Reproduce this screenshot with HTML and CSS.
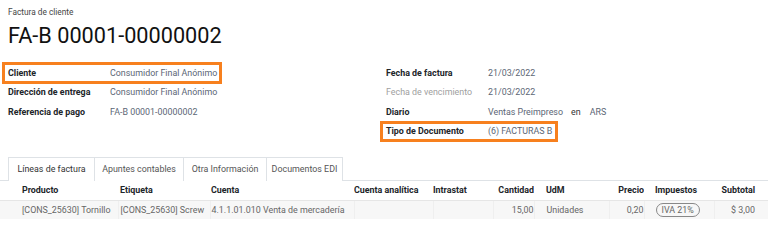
FILE: index.html
```html
<!DOCTYPE html>
<html lang="es">
<head>
<meta charset="utf-8">
<link rel="stylesheet" href="styles.css">
</head>
<body>
<div class="sheet">
  <div class="subtitle">Factura de cliente</div>
  <h1 class="title">FA-B 00001-00000002</h1>
  <div class="groups">
    <div class="group">
      <div class="row hl hl-left"><span class="label">Cliente</span><span class="value">Consumidor Final Anónimo</span></div>
      <div class="row"><span class="label">Dirección de entrega</span><span class="value">Consumidor Final Anónimo</span></div>
      <div class="row"><span class="label">Referencia de pago</span><span class="value">FA-B 00001-00000002</span></div>
    </div>
    <div class="group group-right">
      <div class="row"><span class="label">Fecha de factura</span><span class="value">21/03/2022</span></div>
      <div class="row"><span class="label muted">Fecha de vencimiento</span><span class="value">21/03/2022</span></div>
      <div class="row"><span class="label">Diario</span><span class="value">Ventas Preimpreso<span class="en">en</span>ARS</span></div>
      <div class="row hl hl-right"><span class="label">Tipo de Documento</span><span class="value">(6) FACTURAS B</span></div>
    </div>
  </div>
  <div class="tabs">
    <div class="tab active">Líneas de factura</div>
    <div class="tab">Apuntes contables</div>
    <div class="tab">Otra Información</div>
    <div class="tab">Documentos EDI</div>
  </div>
  <table class="lines">
    <thead>
      <tr>
        <th class="c-prod">Producto</th>
        <th class="c-etq">Etiqueta</th>
        <th class="c-cta">Cuenta</th>
        <th class="c-ana">Cuenta analítica</th>
        <th class="c-int">Intrastat</th>
        <th class="c-cant num">Cantidad</th>
        <th class="c-udm">UdM</th>
        <th class="c-pre num">Precio</th>
        <th class="c-imp">Impuestos</th>
        <th class="c-sub num">Subtotal</th>
      </tr>
    </thead>
    <tbody>
      <tr>
        <td class="c-prod">[CONS_25630] Tornillo</td>
        <td class="c-etq">[CONS_25630] Screw</td>
        <td class="c-cta">4.1.1.01.010 Venta de mercadería</td>
        <td class="c-ana"></td>
        <td class="c-int"></td>
        <td class="c-cant num">15,00</td>
        <td class="c-udm">Unidades</td>
        <td class="c-pre num">0,20</td>
        <td class="c-imp"><span class="badge">IVA 21%</span></td>
        <td class="c-sub num">$ 3,00</td>
      </tr>
    </tbody>
  </table>
</div>
</body>
</html>
```
FILE: styles.css
```css
*, *::before, *::after { box-sizing: border-box; }
html, body { margin: 0; padding: 0; background: #fff; }
body {
  font-family: Roboto, "Liberation Sans", sans-serif;
  font-size: 8.9px;
  color: #212529;
  width: 768px;
  height: 249px;
  overflow: hidden;
}
.sheet { padding-top: 7px; }
.subtitle {
  padding-left: 8px;
  font-size: 8.3px;
  color: #444;
  line-height: 10px;
}
.title {
  margin: 6px 0 0 8px;
  font-size: 21.7px;
  font-weight: 400;
  line-height: 26px;
  color: #111;
}
.groups {
  display: grid;
  grid-template-columns: 380px 388px;
  margin-top: 14px;
}
.group { display: flex; flex-direction: column; }
.row {
  display: flex;
  align-items: center;
  height: 19.5px;
  padding-left: 8px;
}
.group-right .row { padding-left: 6px; }
.label {
  font-weight: 700;
  width: 102px;
  flex: none;
  color: #212529;
}
.label.muted { font-weight: 400; color: #a0a0a0; }
.value { color: #5b6675; white-space: nowrap; }
.en { color: #333; margin: 0 9px 0 8px; }
.hl { position: relative; }
.hl::after {
  content: "";
  position: absolute;
  top: -1px;
  bottom: -1px;
  border: 3px solid #f7801e;
  pointer-events: none;
}
.hl-left::after { left: 2px; width: 220px; }
.hl-right::after { left: 0; width: 178px; }
.tabs {
  display: flex;
  margin-top: 16px;
  padding-left: 8px;
  border-bottom: 1px solid #dee2e6;
  height: 24px;
}
.tab {
  border: 1px solid #dee2e6;
  border-bottom: none;
  border-left: none;
  line-height: 23px;
  color: #555;
  margin-bottom: -1px;
  background: #fff;
  text-align: center;
}
.tab:first-child { border-left: 1px solid #dee2e6; }
.tab.active { color: #333; height: 24px; }
.tab:nth-child(1) { width: 87px; }
.tab:nth-child(2) { width: 89px; }
.tab:nth-child(3) { width: 83px; }
.tab:nth-child(4) { width: 76px; }
.lines {
  width: 768px;
  border-collapse: collapse;
  table-layout: fixed;
}
.lines th, .lines td {
  height: 19px;
  padding: 0;
  text-align: left;
  white-space: nowrap;
  overflow: hidden;
}
.lines th { font-weight: 700; color: #212529; border-bottom: 1px solid #e6e6e6; }
.lines tbody tr { background: #f7f7f7; }
.lines td { color: #666; border-right: 1px solid #efefef; }
.lines td:last-child { border-right: none; }
.lines .num { text-align: right; }
.c-prod { width: 118px; padding-left: 22px !important; }
.c-etq { width: 92px; padding-left: 2px !important; }
.c-cta { width: 144px; padding-left: 1px !important; }
.c-ana { width: 79px; }
.c-int { width: 60px; }
.c-cant { width: 41px; }
.c-udm { width: 75px; padding-left: 12px !important; }
.c-pre { width: 35px; }
.c-imp { width: 70px; padding-left: 11px !important; }
.c-sub { width: 54px; padding-right: 13px !important; }
.badge {
  display: inline-block;
  border: 1px solid #888;
  border-radius: 8px;
  padding: 0 5px;
  line-height: 12px;
  color: #666;
}
```
